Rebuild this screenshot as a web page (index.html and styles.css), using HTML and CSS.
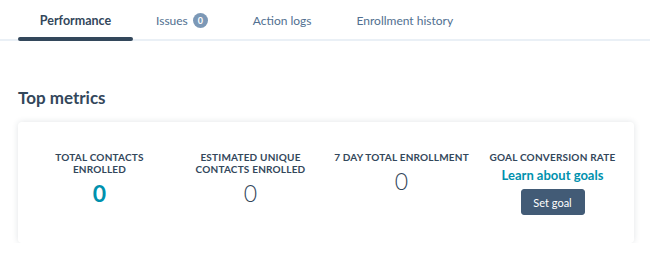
FILE: index.html
```html
<!DOCTYPE html>
<html lang="en">
<head>
    <meta charset="UTF-8">
    <title>Workflow performance</title>
    <link rel="stylesheet" href="styles.css">
</head>
<body>
    <div class="tabs">
        <div class="tab active">Performance</div>
        <div class="tab">Issues <span class="badge">0</span></div>
        <div class="tab">Action logs</div>
        <div class="tab">Enrollment history</div>
    </div>

    <div class="content">
        <h2>Top metrics</h2>
        <div class="card">
            <div class="metric">
                <div class="label">Total contacts<br>enrolled</div>
                <div class="value strong">0</div>
            </div>
            <div class="metric">
                <div class="label">Estimated unique<br>contacts enrolled</div>
                <div class="value">0</div>
            </div>
            <div class="metric">
                <div class="label">7 day total enrollment</div>
                <div class="value">0</div>
            </div>
            <div class="metric">
                <div class="label">Goal conversion rate</div>
                <a class="learn" href="#">Learn about goals</a>
                <button class="set-goal">Set goal</button>
            </div>
        </div>
    </div>
</body>
</html>
```

FILE: styles.css
```css
body {
    font-family: Lato, "Open Sans", sans-serif;
    color: #33475b;
    background: #fff;
    margin: 0;
    padding: 0;
}

.tabs {
    display: flex;
    border-bottom: 2px solid #eaf0f6;
    height: 39px;
    padding-left: 18px;
    margin-right: 3px;
}

.tab {
    position: relative;
    display: flex;
    align-items: center;
    justify-content: center;
    height: 41px;
    padding: 0 22px 0 23px;
    font-size: 12px;
    color: #516f90;
    box-sizing: border-box;
}

.tab.active {
    color: #33475b;
    font-weight: bold;
    font-size: 12.5px;
    width: 115px;
    padding: 0;
}

.tab.active::after {
    content: "";
    position: absolute;
    left: 0;
    right: 0;
    bottom: 0;
    height: 4px;
    border-radius: 2px;
    background: #33475b;
}

.badge {
    display: inline-flex;
    align-items: center;
    justify-content: center;
    width: 15px;
    height: 15px;
    margin-left: 5px;
    border-radius: 50%;
    background: #7c98b6;
    color: #fff;
    font-size: 9px;
    font-weight: bold;
}

.content {
    padding: 0 18px;
}

.content h2 {
    font-size: 17px;
    margin: 46px 0 14px;
    color: #33475b;
}

.card {
    display: grid;
    grid-template-columns: repeat(4, 1fr);
    width: 616px;
    box-sizing: border-box;
    padding: 29px 6px 24px;
    border-radius: 4px;
    background: #fff;
    box-shadow: 0 0 6px rgba(45, 62, 80, 0.14);
    min-height: 121px;
}

.metric {
    display: flex;
    flex-direction: column;
    align-items: center;
    text-align: center;
}

.label {
    font-size: 10px;
    font-weight: bold;
    text-transform: uppercase;
    letter-spacing: 0.2px;
    line-height: 12px;
    color: #33475b;
}

.value {
    font-size: 23px;
    font-weight: 300;
    line-height: 26px;
    margin-top: 5px;
}

.value.strong {
    color: #0091ae;
    font-weight: bold;
}

.learn {
    margin-top: 4px;
    font-size: 13px;
    font-weight: bold;
    color: #0091ae;
    text-decoration: none;
}

.set-goal {
    margin-top: 6px;
    width: 64px;
    height: 26px;
    border: 1px solid #425b76;
    border-radius: 3px;
    background: #425b76;
    color: #fff;
    font-family: inherit;
    font-size: 11px;
}
```
